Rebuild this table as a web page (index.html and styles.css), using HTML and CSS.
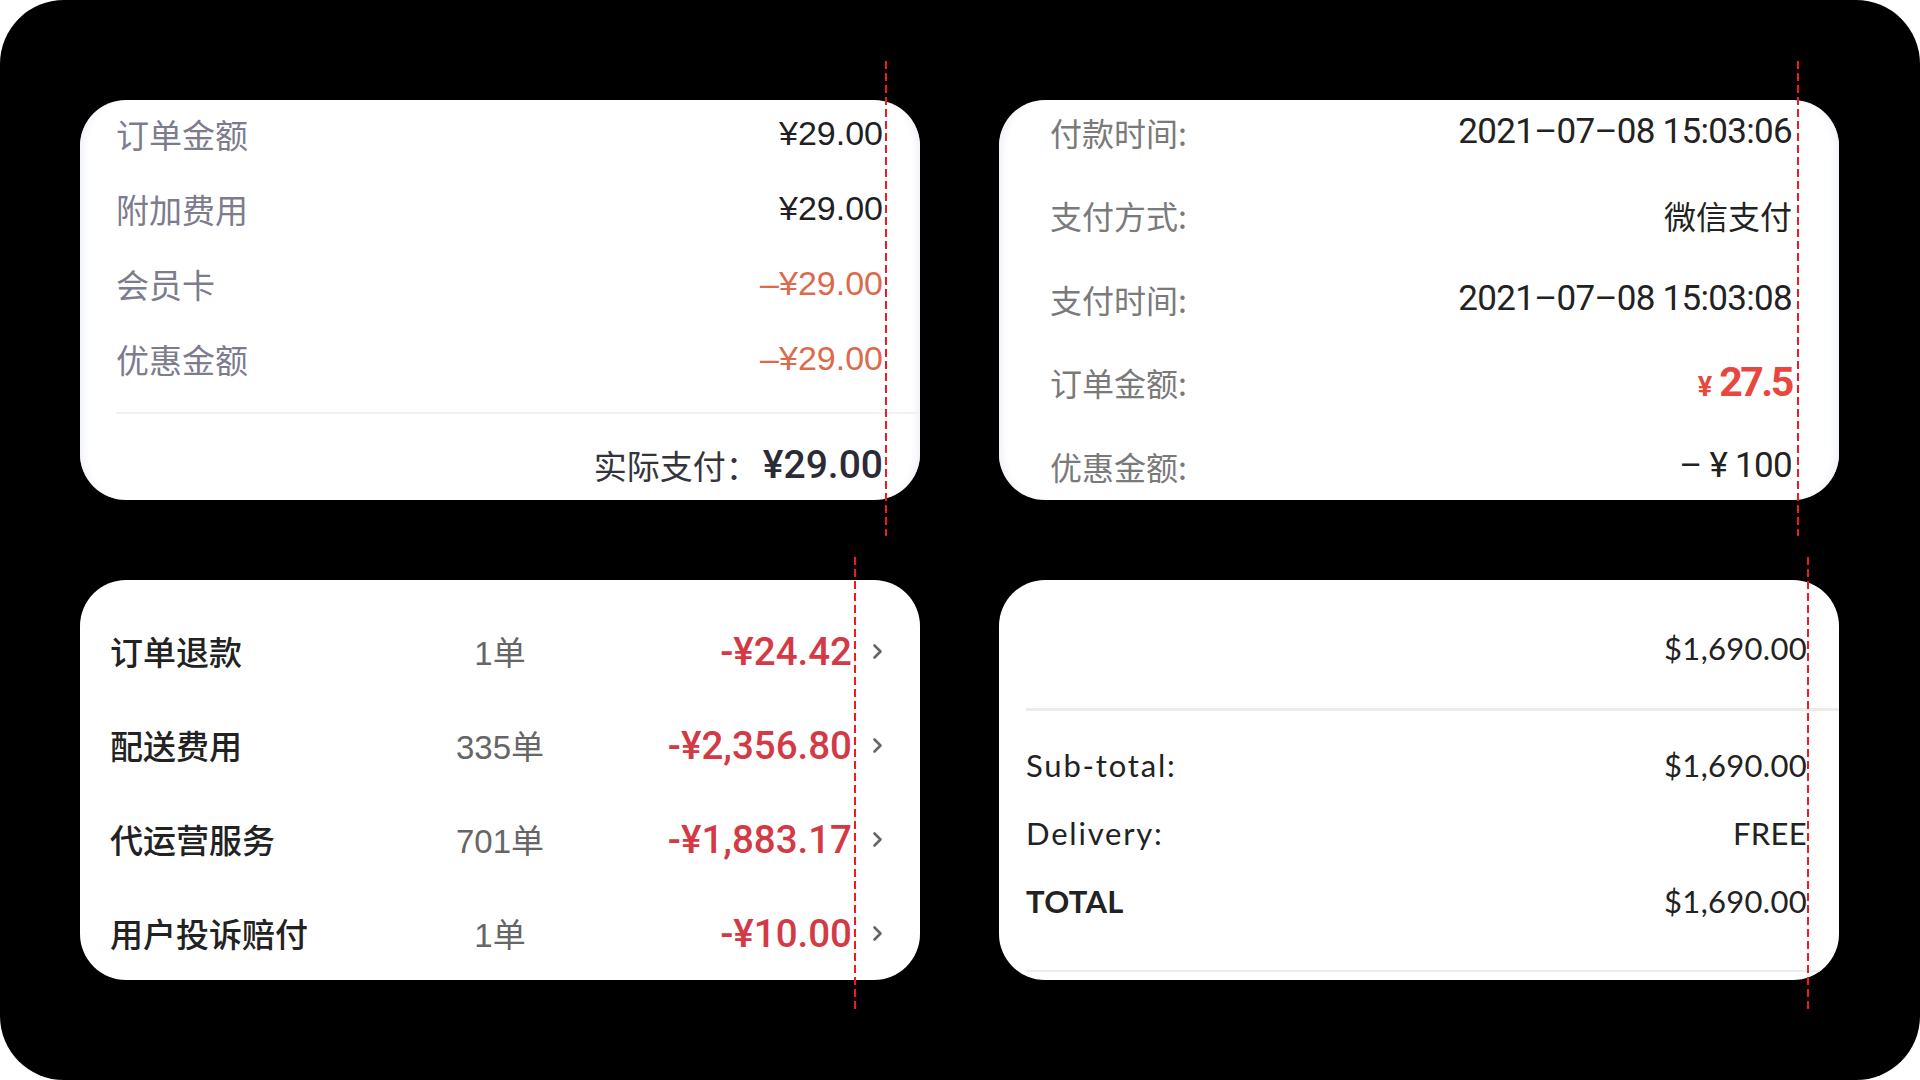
FILE: index.html
```html
<!DOCTYPE html>
<html lang="zh-CN">
<head>
    <meta charset="UTF-8">
    <meta name="viewport" content="width=device-width, initial-scale=1.0">
    <title>Order Summary Cards</title>
    <link rel="stylesheet" href="styles.css">
</head>
<body>
    <div class="frame">

        <!-- order fees -->
        <div class="cell">
            <div class="card card-fees tinted">
                <div class="fee-row"><span class="fee-label">订单金额</span><span class="fee-value">¥29.00</span></div>
                <div class="fee-row"><span class="fee-label">附加费用</span><span class="fee-value">¥29.00</span></div>
                <div class="fee-row"><span class="fee-label">会员卡</span><span class="fee-value minus">–¥29.00</span></div>
                <div class="fee-row"><span class="fee-label">优惠金额</span><span class="fee-value minus">–¥29.00</span></div>
                <div class="fee-divider"></div>
                <div class="fee-total"><span class="fee-total-label">实际支付：</span><strong class="fee-total-value">¥29.00</strong></div>
            </div>
            <div class="guide guide-fees"></div>
        </div>

        <!-- payment info -->
        <div class="cell">
            <div class="card card-pay tinted">
                <div class="pay-list">
                    <div class="pay-row"><span class="pay-label">付款时间:</span><span class="pay-value">2021–07–08 15:03:06</span></div>
                    <div class="pay-row"><span class="pay-label">支付方式:</span><span class="pay-value cjk">微信支付</span></div>
                    <div class="pay-row"><span class="pay-label">支付时间:</span><span class="pay-value">2021–07–08 15:03:08</span></div>
                    <div class="pay-row"><span class="pay-label">订单金额:</span><span class="pay-value price"><small>¥</small>27.5</span></div>
                    <div class="pay-row"><span class="pay-label">优惠金额:</span><span class="pay-value">– ¥ 100</span></div>
                </div>
            </div>
            <div class="guide guide-pay"></div>
        </div>

        <!-- settlement -->
        <div class="cell">
            <div class="card card-bill">
                <div class="bill-row">
                    <span class="bill-label">订单退款</span><span class="bill-count">1单</span>
                    <span class="bill-value">-¥24.42</span>
                    <svg class="chevron" width="11" height="17" viewBox="0 0 11 17"><path d="M2.5 2.5l6 6-6 6" fill="none" stroke="#666" stroke-width="2.6" stroke-linecap="round" stroke-linejoin="round"/></svg>
                </div>
                <div class="bill-row">
                    <span class="bill-label">配送费用</span><span class="bill-count">335单</span>
                    <span class="bill-value">-¥2,356.80</span>
                    <svg class="chevron" width="11" height="17" viewBox="0 0 11 17"><path d="M2.5 2.5l6 6-6 6" fill="none" stroke="#666" stroke-width="2.6" stroke-linecap="round" stroke-linejoin="round"/></svg>
                </div>
                <div class="bill-row">
                    <span class="bill-label">代运营服务</span><span class="bill-count">701单</span>
                    <span class="bill-value">-¥1,883.17</span>
                    <svg class="chevron" width="11" height="17" viewBox="0 0 11 17"><path d="M2.5 2.5l6 6-6 6" fill="none" stroke="#666" stroke-width="2.6" stroke-linecap="round" stroke-linejoin="round"/></svg>
                </div>
                <div class="bill-row">
                    <span class="bill-label">用户投诉赔付</span><span class="bill-count">1单</span>
                    <span class="bill-value">-¥10.00</span>
                    <svg class="chevron" width="11" height="17" viewBox="0 0 11 17"><path d="M2.5 2.5l6 6-6 6" fill="none" stroke="#666" stroke-width="2.6" stroke-linecap="round" stroke-linejoin="round"/></svg>
                </div>
            </div>
            <div class="guide guide-bill"></div>
        </div>

        <!-- cart totals -->
        <div class="cell">
            <div class="card card-cart">
                <div class="cart-head"><span class="cart-value">$1,690.00</span></div>
                <div class="cart-divider"></div>
                <div class="cart-rows">
                    <div class="cart-row"><span>Sub-total:</span><span class="cart-value">$1,690.00</span></div>
                    <div class="cart-row"><span>Delivery:</span><span class="cart-value">FREE</span></div>
                    <div class="cart-row total"><span>TOTAL</span><span class="cart-value">$1,690.00</span></div>
                </div>
                <div class="cart-divider bottom"></div>
            </div>
            <div class="guide guide-cart"></div>
        </div>

    </div>
</body>
</html>
```

FILE: styles.css
```css
body {
    margin: 0;
    padding: 0;
    background-color: #fff;
    font-family: 'Liberation Sans', 'Noto Sans CJK SC', sans-serif;
}
.frame {
    width: 1920px;
    height: 1080px;
    box-sizing: border-box;
    background-color: #000;
    border-radius: 64px;
    padding: 100px 81px 100px 80px;
    display: grid;
    grid-template-columns: 840px 840px;
    grid-template-rows: 400px 400px;
    column-gap: 79px;
    row-gap: 80px;
}
.cell {
    position: relative;
}
.card {
    height: 100%;
    box-sizing: border-box;
    background-color: #fff;
    border-radius: 46px;
    overflow: hidden;
}
.card.tinted {
    box-shadow: inset 9px 0 8px -6px #eef0f7, inset -9px 0 8px -6px #eef0f7;
}

/* red dashed guide lines laid over the cards */
.guide {
    position: absolute;
    width: 2px;
    background-image: repeating-linear-gradient(to bottom, #f21b1b 0, #f21b1b 8px, transparent 8px, transparent 12px);
}
.guide-fees { left: 805px; top: -39px; bottom: -36px; }
.guide-pay { left: 798px; top: -39px; bottom: -36px; }
.guide-bill { left: 774px; top: -23px; bottom: -31px; }
.guide-cart { left: 808px; top: -23px; bottom: -31px; }

/* card 1 */
.card-fees {
    padding: 0 37px 0 36px;
    display: flex;
    flex-direction: column;
}
.fee-row {
    flex-shrink: 0;
    height: 75px;
    display: flex;
    align-items: center;
    justify-content: space-between;
}
.fee-row:first-child {
    margin-top: -4px;
}
.fee-label {
    font-family: 'Noto Sans CJK SC', sans-serif;
    font-size: 33px;
    color: #7c7c8e;
}
.fee-value {
    font-size: 34px;
    color: #1f1f24;
}
.fee-value.minus {
    color: #dc6a4c;
}
.fee-divider {
    flex-shrink: 0;
    height: 2px;
    margin: 16px -37px 0 0;
    background-color: #f0f1f6;
}
.fee-total {
    flex-shrink: 0;
    height: 102px;
    display: flex;
    align-items: center;
    justify-content: flex-end;
}
.fee-total-label {
    font-family: 'Noto Sans CJK SC', sans-serif;
    font-size: 33px;
    color: #34343c;
    margin-right: 4px;
}
.fee-total-value {
    font-family: 'Roboto', sans-serif;
    font-weight: 500;
    font-size: 39px;
    color: #2b2b36;
}

/* card 2 */
.card-pay {
    padding: 0 47px 0 51px;
}
.pay-list {
    margin-top: -10px;
}
.pay-row {
    height: 83.5px;
    display: flex;
    align-items: center;
    justify-content: space-between;
}
.pay-label {
    font-family: 'Noto Sans CJK SC', sans-serif;
    font-size: 32px;
    color: #7a7a7a;
}
.pay-value {
    font-family: 'Roboto', 'Noto Sans CJK SC', sans-serif;
    font-size: 35px;
    letter-spacing: -0.7px;
    color: #222;
}
.pay-value.cjk {
    font-family: 'Noto Sans CJK SC', sans-serif;
    font-size: 32px;
    letter-spacing: 0;
}
.pay-value.price {
    font-size: 41px;
    font-weight: 700;
    color: #e8473e;
    letter-spacing: -2.4px;
}
.pay-value.price small {
    font-size: 27px;
    margin-right: 7px;
    letter-spacing: 0;
}

/* card 3 */
.card-bill {
    padding: 24px 37px 0 30px;
}
.bill-row {
    height: 94px;
    display: grid;
    grid-template-columns: 280px 220px 1fr 31px;
    align-items: center;
}
.bill-label {
    font-family: 'Noto Sans CJK SC', sans-serif;
    font-size: 33px;
    font-weight: 500;
    color: #222;
}
.bill-count {
    text-align: center;
    font-family: 'Liberation Sans', 'Noto Sans CJK SC', sans-serif;
    font-size: 33px;
    color: #666;
}
.bill-value {
    text-align: right;
    font-family: 'Roboto', sans-serif;
    font-weight: 500;
    font-size: 38.5px;
    color: #d33a45;
}
.chevron {
    justify-self: end;
}

/* card 4 */
.card-cart {
    padding: 0 32px 0 27px;
    font-family: 'Lato', sans-serif;
    font-size: 31px;
    color: #222;
}
.cart-head {
    height: 128px;
    box-sizing: border-box;
    padding-top: 8px;
    display: flex;
    align-items: center;
    justify-content: flex-end;
}
.cart-divider {
    height: 3px;
    margin-right: -32px;
    background-color: #ececec;
}
.cart-divider.bottom {
    height: 2px;
    margin-top: 35px;
}
.cart-rows {
    padding-top: 20px;
}
.cart-row {
    height: 68px;
    display: flex;
    align-items: center;
    justify-content: space-between;
    letter-spacing: 1.8px;
}
.cart-row.total span:first-child {
    font-weight: 700;
    letter-spacing: 0.3px;
}
.cart-value {
    letter-spacing: 0.3px;
}
```
